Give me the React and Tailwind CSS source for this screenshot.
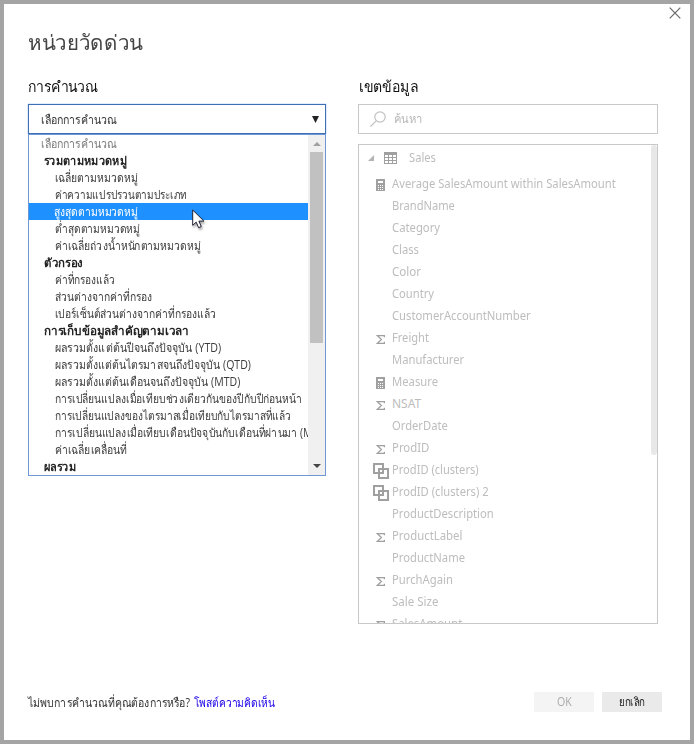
import { useLayoutEffect, useRef, useState } from "react";

// Text condensed or widened to a set width, like a font with its own metrics.
function Label({ w, children, className = "" }) {
  const ref = useRef(null);
  const [scale, setScale] = useState(1);
  useLayoutEffect(() => {
    const measure = () => {
      if (ref.current) setScale(w / ref.current.offsetWidth);
    };
    measure();
    document.fonts?.ready.then(measure);
  }, [w]);
  return (
    <span className={"flex shrink-0 " + className} style={{ width: w }}>
      <span
        ref={ref}
        className="inline-block shrink-0 origin-left whitespace-nowrap"
        style={{ transform: `scaleX(${scale})` }}
      >
        {children}
      </span>
    </span>
  );
}

const options = [
  { t: "เลือกการคำนวณ", w: 76, kind: "hint" },
  { t: "รวมตามหมวดหมู่", w: 83, kind: "group" },
  { t: "เฉลี่ยตามหมวดหมู่", w: 83 },
  { t: "ค่าความแปรปรวนตามประเภท", w: 132 },
  { t: "สูงสุดตามหมวดหมู่", w: 84, kind: "active" },
  { t: "ต่ำสุดตามหมวดหมู่", w: 85 },
  { t: "ค่าเฉลี่ยถ่วงน้ำหนักตามหมวดหมู่", w: 146 },
  { t: "ตัวกรอง", w: 39, kind: "group" },
  { t: "ค่าที่กรองแล้ว", w: 60 },
  { t: "ส่วนต่างจากค่าที่กรอง", w: 97 },
  { t: "เปอร์เซ็นต์ส่วนต่างจากค่าที่กรองแล้ว", w: 161 },
  { t: "การเก็บข้อมูลสำคัญตามเวลา", w: 145, kind: "group" },
  { t: "ผลรวมตั้งแต่ต้นปีจนถึงปัจจุบัน (YTD)", w: 166 },
  { t: "ผลรวมตั้งแต่ต้นไตรมาสจนถึงปัจจุบัน (QTD)", w: 196 },
  { t: "ผลรวมตั้งแต่ต้นเดือนจนถึงปัจจุบัน (MTD)", w: 185 },
  { t: "การเปลี่ยนแปลงเมื่อเทียบช่วงเดียวกันของปีกับปีก่อนหน้า", w: 247 },
  { t: "การเปลี่ยนแปลงของไตรมาสเมื่อเทียบกับไตรมาสที่แล้ว", w: 236 },
  { t: "การเปลี่ยนแปลงเมื่อเทียบเดือนปัจจุบันกับเดือนที่ผ่านมา (MoM)", w: 276 },
  { t: "ค่าเฉลี่ยเคลื่อนที่", w: 72 },
  { t: "ผลรวม", w: 32, kind: "group" },
];

const optionStyle = {
  hint: "pl-3 text-[#7b7b7b]",
  group: "pl-[15px] font-bold text-[#222]",
  active: "pl-[25px] bg-[#1e90ff] text-white",
  item: "pl-[26px] text-[#3c3c3c]",
};

const fields = [
  ["Average SalesAmount within SalesAmount", 224, "calc"],
  ["BrandName", 63],
  ["Category", 48],
  ["Class", 27],
  ["Color", 29],
  ["Country", 42],
  ["CustomerAccountNumber", 139],
  ["Freight", 37, "sum"],
  ["Manufacturer", 72],
  ["Measure", 46, "calc"],
  ["NSAT", 29, "sum"],
  ["OrderDate", 56],
  ["ProdID", 37, "sum"],
  ["ProdID (clusters)", 87, "cluster"],
  ["ProdID (clusters) 2", 97, "cluster"],
  ["ProductDescription", 102],
  ["ProductLabel", 70, "sum"],
  ["ProductName", 73],
  ["PurchAgain", 61, "sum"],
  ["Sale Size", 46],
  ["SalesAmount", 70, "sum"],
];

function FieldIcon({ kind }) {
  if (kind === "calc")
    return (
      <svg className="ml-[5px] mt-1.5" width="9" height="12" viewBox="0 0 9 12" shapeRendering="crispEdges">
        <rect width="9" height="12" rx="1" fill="#a0a0a0" />
        <path fill="#fff" d="M2 2h5v2H2zM2 6h1v1H2zM4 6h1v1H4zM6 6h1v1H6zM2 8h1v1H2zM4 8h1v1H4zM6 8h1v1H6zM2 10h1v1H2zM4 10h1v1H4zM6 10h1v1H6z" />
      </svg>
    );
  if (kind === "sum")
    return (
      <svg className="ml-[5px] mt-2" width="9" height="9" viewBox="0 0 9 9" fill="none" stroke="#a0a0a0">
        <path d="M8.4 2.2V.6H1.2L5.4 4.5 1.2 8.4h7.2V6.8" strokeWidth="1.3" />
      </svg>
    );
  if (kind === "cluster")
    return (
      <svg className="ml-0.5 mt-1" width="16" height="16" viewBox="0 0 16 16" fill="none" stroke="#a0a0a0" strokeWidth="2">
        <path d="M1 1h9v9H1zM6 6h9v9H6z" />
      </svg>
    );
  return null;
}

export default function App() {
  return (
    <div className="flex h-[744px] w-[694px] flex-col border-4 border-[#a4a4a4] bg-white font-['Open_Sans','Noto_Sans',sans-serif] text-xs text-[#333]">
      <header className="relative h-[68px] pl-6 pt-[22px]">
        <h1 className="flex h-8 items-center text-[21px] text-[#444]">
          <Label w={115}>หน่วยวัดด่วน</Label>
        </h1>
        <svg className="absolute right-[9px] top-[3px]" width="12" height="12" viewBox="0 0 12 12" stroke="#666" strokeWidth="1.2">
          <path d="M.7.7l10.6 10.6M11.3.7L.7 11.3" />
        </svg>
      </header>

      <main className="flex h-[552px] gap-8 pl-6">
        <section className="w-[298px]">
          <h2 className="flex h-8 items-center pb-1 text-[15px] text-[#111]">
            <Label w={70}>การคำนวณ</Label>
          </h2>
          <div className="flex h-[30px] items-center justify-between border border-[#3f6fb5] pl-3 pr-1.5 shadow-[0_0_1px_#4e8df5]">
            <Label w={76} className="pt-px">เลือกการคำนวณ</Label>
            <svg width="7" height="7" viewBox="0 0 7 7" fill="#222">
              <path d="M0 0h7L3.5 7z" />
            </svg>
          </div>
          <div className="flex h-[342px] border border-[#6f97d3]">
            <ul className="w-[279px] overflow-hidden">
              {options.map(({ t, w, kind = "item" }) => (
                <li key={t} className={"flex h-[17px] items-center overflow-hidden " + optionStyle[kind]}>
                  <Label w={w} className="leading-[17px]">{t}</Label>
                </li>
              ))}
            </ul>
            <div className="flex w-[17px] flex-col items-center justify-between bg-[#f0f0f0] pb-[7px]">
              <div className="flex h-[17px] items-center">
                <svg width="8" height="4" viewBox="0 0 8 4" fill="#a0a0a0">
                  <path d="M0 4h8L4 0z" />
                </svg>
              </div>
              <div className="mb-auto h-[191px] w-[13px] bg-[#c1c1c1]" />
              <svg width="8" height="4" viewBox="0 0 8 4" fill="#444">
                <path d="M0 0h8L4 4z" />
              </svg>
            </div>
          </div>
        </section>

        <section className="w-[300px]">
          <h2 className="flex h-8 items-center pb-1 pl-px text-[15px] text-[#111]">
            <Label w={59}>เขตข้อมูล</Label>
          </h2>
          <div className="flex h-[30px] items-center border border-[#c8c8c8] pl-[11px] text-[#b8b8b8]">
            <svg className="mr-2" width="16" height="16" viewBox="0 0 16 16" fill="none" stroke="#c0c0c0" strokeWidth="1.2">
              <circle cx="10" cy="6" r="5.2" />
              <path d="M6.2 9.8L.5 15.5" />
            </svg>
            <Label w={29}>ค้นหา</Label>
          </div>
          <div className="mt-2.5 flex h-[480px] overflow-hidden border border-[#c8c8c8] font-['Noto_Sans',sans-serif] text-[#bdbdbd]">
            <div className="w-[292px]">
              <div className="flex h-[26px] items-center pl-[9px]">
                <svg width="6" height="6" viewBox="0 0 6 6" fill="#b4b4b4">
                  <path d="M6 0v6H0z" />
                </svg>
                <svg className="ml-2.5" width="13" height="12" viewBox="0 0 13 12" shapeRendering="crispEdges">
                  <path fill="#a0a0a0" d="M0 0h13v12H0z" />
                  <path fill="#fff" d="M1 3h3v2H1zM5 3h3v2H5zM9 3h3v2H9zM1 6h3v2H1zM5 6h3v2H5zM9 6h3v2H9zM1 9h3v2H1zM5 9h3v2H5zM9 9h3v2H9z" />
                </svg>
                <Label w={27} className="ml-3">Sales</Label>
              </div>
              <ul className="mt-0.5">
                {fields.map(([name, w, kind]) => (
                  <li key={name} className="flex h-[22px] pl-3">
                    <span className="w-[21px]">
                      <FieldIcon kind={kind} />
                    </span>
                    <Label w={w} className="leading-[22px]">{name}</Label>
                  </li>
                ))}
              </ul>
            </div>
            <div className="h-[310px] w-1.5 rounded-[3px] bg-[#e8e8e8]" />
          </div>
        </section>
      </main>

      <footer className="mt-[68px] flex h-5 items-center pl-6">
        <Label w={162} className="pt-px">ไม่พบการคำนวณที่คุณต้องการหรือ?</Label>
        <a className="ml-1 pt-px text-[#1a00e8]" href="#feedback">
          <Label w={81}>โพสต์ความคิดเห็น</Label>
        </a>
        <div className="ml-auto mr-7 flex gap-2">
          <button className="flex h-5 w-[60px] items-center justify-center bg-[#f4f4f4] text-[#aaa]">
            <Label w={15}>OK</Label>
          </button>
          <button className="flex h-5 w-[60px] items-center justify-center bg-[#eaeaea] text-[#222]">
            <Label w={26}>ยกเลิก</Label>
          </button>
        </div>
      </footer>

      <svg className="absolute left-[192px] top-[209px] drop-shadow-[1px_2px_1px_rgba(0,0,0,0.35)]" width="13" height="20" viewBox="0 0 13 20" fill="#fff" stroke="#223" strokeWidth="1">
        <path d="M.7 1v15.3l3.5-3.2 2.4 5.6 2.7-1.2-2.4-5.4h5z" />
      </svg>
    </div>
  );
}
